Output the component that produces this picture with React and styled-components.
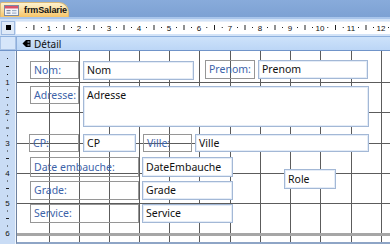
import React from 'react';
import styled, { createGlobalStyle } from 'styled-components';

const Global = createGlobalStyle`
  html, body { margin: 0; padding: 0; background: #ffffff; }
  body { font-family: "Noto Sans", "Open Sans", sans-serif; }
`;

const GX = [49, 79, 109, 139, 169, 199, 230, 260, 290, 320, 351, 381];
const GY = [82, 112, 143, 173, 203, 233];
const CANVAS_X = 17;
const CANVAS_Y = 51;

const Window = styled.div`
  width: 390px;
  height: 244px;
  display: flex;
  flex-direction: column;
  overflow: hidden;
  background: #fff;
`;

const TitleBar = styled.div`
  flex: none;
  height: 17px;
  display: flex;
  align-items: flex-end;
  background: linear-gradient(#88abdb, #7da1d3);
  border-bottom: 2px solid #a9c5eb;
`;

const Tab = styled.div`
  box-sizing: border-box;
  height: 15px;
  width: 69px;
  display: flex;
  align-items: center;
  gap: 5px;
  padding-left: 3px;
  background: linear-gradient(#fdf2cf, #fadb9a 55%, #f6c468);
  border: 1px solid #d9b979;
  border-bottom: none;
  border-radius: 2px 10px 0 0;
  font: bold 9px "Liberation Sans", Arial, sans-serif;
  letter-spacing: -0.1px;
  color: #111;
`;

const RulerRow = styled.div`
  flex: none;
  height: 17px;
  display: flex;
  background: #d3e3f7;
  border-bottom: 1px solid #8db0dd;
`;

const Corner = styled.div`
  flex: none;
  width: 16px;
  display: flex;
  align-items: center;
  justify-content: center;
`;

const CornerBox = styled.div`
  box-sizing: border-box;
  width: 14px;
  height: 14px;
  display: flex;
  align-items: center;
  justify-content: center;
  background: #dfeaf8;
  border: 1px solid #9fbae0;
`;

const CornerSquare = styled.div`
  width: 5px;
  height: 5px;
  background: #000;
`;

const Ruler = styled.div`
  flex: 1;
  height: 12px;
  margin-top: 2px;
  background: #fff;
  border-top: 1px solid #e6eefa;
`;

const SectionRow = styled.div`
  flex: none;
  height: 13px;
  display: flex;
  background: #c3dbf8;
  border-bottom: 1px solid #7094c9;
`;

const SectionLeft = styled.div`
  box-sizing: border-box;
  flex: none;
  width: 16px;
  background: #d6e6fa;
  border: 1px solid #a9c3e6;
  border-top: none;
`;

const SectionHeader = styled.div`
  flex: 1;
  display: flex;
  align-items: center;
  gap: 3px;
  padding-left: 5px;
  border-left: 1px solid #8eaedb;
  background: linear-gradient(#cde2fa, #bcd6f6);
  font: 10px "Noto Sans", sans-serif;
  color: #111;
`;

const Body = styled.div`
  flex: 1;
  display: flex;
  min-height: 0;
`;

const VRuler = styled.div`
  flex: none;
  width: 15px;
  background: #c9dcf5;
  border-right: 1px solid #eef4fc;
`;

const Canvas = styled.div`
  position: relative;
  flex: 1;
  background: #fff;
  border-left: 1px solid #6d819f;
  border-bottom: 2px solid #8ea5c6;
  overflow: hidden;
`;

const GridSvg = styled.svg`
  position: absolute;
  left: 0;
  top: 0;
`;

const Control = styled.div`
  position: absolute;
  box-sizing: border-box;
  left: ${p => p.$x - CANVAS_X}px;
  top: ${p => p.$y - CANVAS_Y}px;
  width: ${p => p.$w}px;
  height: ${p => p.$h}px;
  padding: 0 3px;
  font: 10.5px "Noto Sans", "Open Sans", sans-serif;
  white-space: nowrap;
  overflow: hidden;
`;

const Label = styled(Control)`
  border: 1px solid #969696;
  background: transparent;
  color: #3d63a9;
  line-height: ${p => p.$h - 2}px;
`;

const TextBox = styled(Control)`
  border: 1px solid #a3b8d6;
  box-shadow: inset 0 0 0 1px #e4ecf7;
  background: #fff;
  color: #111;
  line-height: ${p => (p.$multi ? '15px' : `${p.$h - 2}px`)};
  padding-top: ${p => (p.$multi ? '1px' : '0')};
`;

function FormIcon() {
  return (
    <svg width="15" height="11" viewBox="0 0 15 11">
      <rect x="0.5" y="0.5" width="14" height="10" fill="#f4f6fa" stroke="#7b8aa3" />
      <rect x="1" y="1" width="13" height="2.5" fill="#d9546a" />
      <rect x="2.5" y="5" width="4" height="1.2" fill="#7d8aa0" />
      <rect x="8" y="5" width="4.5" height="1.2" fill="#9fb0c9" />
      <rect x="2.5" y="7.5" width="4" height="1.2" fill="#7d8aa0" />
      <rect x="8" y="7.5" width="4.5" height="1.2" fill="#9fb0c9" />
    </svg>
  );
}

function SectionIcon() {
  return (
    <svg width="9" height="9" viewBox="0 0 9 9">
      <path d="M0.5 4.5 L4 1 L8.5 1 L8.5 8 L4 8 Z" fill="#000" />
      <path d="M5.5 3 L7.5 3 M5.5 6 L7.5 6" stroke="#c3dbf8" strokeWidth="1" />
    </svg>
  );
}

function HRuler() {
  const left = 16;
  const marks = [];
  let prev = GX[0] - 30.2;
  GX.forEach((g, i) => {
    const d = (g - prev) / 4;
    marks.push(<rect key={`a${i}`} x={prev + d - left - 0.5} y={5} width={1} height={1} fill="#222" />);
    marks.push(<rect key={`b${i}`} x={prev + 2 * d - left - 0.5} y={3} width={1} height={5} fill="#222" />);
    marks.push(<rect key={`c${i}`} x={prev + 3 * d - left - 0.5} y={5} width={1} height={1} fill="#222" />);
    marks.push(
      <text key={`t${i}`} x={g - left} y={8.5} fontSize="8" fontFamily="Liberation Sans, Arial, sans-serif" textAnchor="middle" fill="#111">
        {i + 1}
      </text>
    );
    prev = g;
  });
  marks.push(<rect key="end" x={388 - left} y={5} width={1} height={1} fill="#222" />);
  return (
    <svg width="374" height="11" style={{ display: 'block' }}>
      {marks}
    </svg>
  );
}

function VRulerMarks() {
  const marks = [];
  let prev = CANVAS_Y - 1;
  GY.forEach((g, i) => {
    const d = (g - prev) / 4;
    const o = CANVAS_Y;
    marks.push(<rect key={`a${i}`} x={7} y={prev + d - o} width={1} height={1} fill="#222" />);
    marks.push(<rect key={`b${i}`} x={6} y={prev + 2 * d - o} width={3} height={1} fill="#222" />);
    marks.push(<rect key={`c${i}`} x={7} y={prev + 3 * d - o} width={1} height={1} fill="#222" />);
    marks.push(
      <text key={`t${i}`} x={7.5} y={g - o + 3} fontSize="8" fontFamily="Liberation Sans, Arial, sans-serif" textAnchor="middle" fill="#111">
        {i + 1}
      </text>
    );
    prev = g;
  });
  return (
    <svg width="15" height="193" style={{ display: 'block' }}>
      {marks}
    </svg>
  );
}

function Grid() {
  const w = 373;
  const h = 191;
  return (
    <GridSvg width={w} height={h}>
      {GX.map(x => (
        <line key={`v${x}`} x1={x - CANVAS_X + 0.5} y1={0} x2={x - CANVAS_X + 0.5} y2={h} stroke="#5c5c5c" strokeWidth="1" />
      ))}
      {GY.slice(0, 5).map(y => (
        <line key={`h${y}`} x1={0} y1={y - CANVAS_Y + 0.5} x2={w} y2={y - CANVAS_Y + 0.5} stroke="#5c5c5c" strokeWidth="1" />
      ))}
      <rect x={0} y={GY[5] - CANVAS_Y} width={w} height={3} fill="#a6a6a6" />
    </GridSvg>
  );
}

const labels = [
  { t: 'Nom:', x: 30, y: 61, w: 49, h: 18 },
  { t: 'Prenom:', x: 205, y: 60, w: 50, h: 19 },
  { t: 'Adresse:', x: 30, y: 86, w: 49, h: 18 },
  { t: 'CP:', x: 29, y: 134, w: 50, h: 18 },
  { t: 'Ville:', x: 143, y: 134, w: 49, h: 18 },
  { t: 'Date embauche:', x: 30, y: 157, w: 109, h: 20 },
  { t: 'Grade:', x: 30, y: 181, w: 109, h: 19 },
  { t: 'Service:', x: 30, y: 204, w: 109, h: 19 },
];

const boxes = [
  { t: 'Nom', x: 83, y: 61, w: 111, h: 19 },
  { t: 'Prenom', x: 258, y: 60, w: 110, h: 19 },
  { t: 'Adresse', x: 83, y: 86, w: 286, h: 41, multi: true },
  { t: 'CP', x: 83, y: 134, w: 53, h: 18 },
  { t: 'Ville', x: 195, y: 134, w: 174, h: 18 },
  { t: 'DateEmbauche', x: 142, y: 157, w: 91, h: 20 },
  { t: 'Grade', x: 142, y: 181, w: 91, h: 19 },
  { t: 'Service', x: 142, y: 204, w: 91, h: 19 },
  { t: 'Role', x: 284, y: 169, w: 52, h: 20 },
];

export default function App() {
  return (
    <>
      <Global />
      <Window>
        <TitleBar>
          <Tab>
            <FormIcon />
            <span>frmSalarie</span>
          </Tab>
        </TitleBar>
        <RulerRow>
          <Corner>
            <CornerBox>
              <CornerSquare />
            </CornerBox>
          </Corner>
          <Ruler>
            <HRuler />
          </Ruler>
        </RulerRow>
        <SectionRow>
          <SectionLeft />
          <SectionHeader>
            <SectionIcon />
            <span>Détail</span>
          </SectionHeader>
        </SectionRow>
        <Body>
          <VRuler>
            <VRulerMarks />
          </VRuler>
          <Canvas>
            <Grid />
            {labels.map(l => (
              <Label key={l.t} $x={l.x} $y={l.y} $w={l.w} $h={l.h}>
                {l.t}
              </Label>
            ))}
            {boxes.map(b => (
              <TextBox key={b.t} $x={b.x} $y={b.y} $w={b.w} $h={b.h} $multi={b.multi}>
                {b.t}
              </TextBox>
            ))}
          </Canvas>
        </Body>
      </Window>
    </>
  );
}
